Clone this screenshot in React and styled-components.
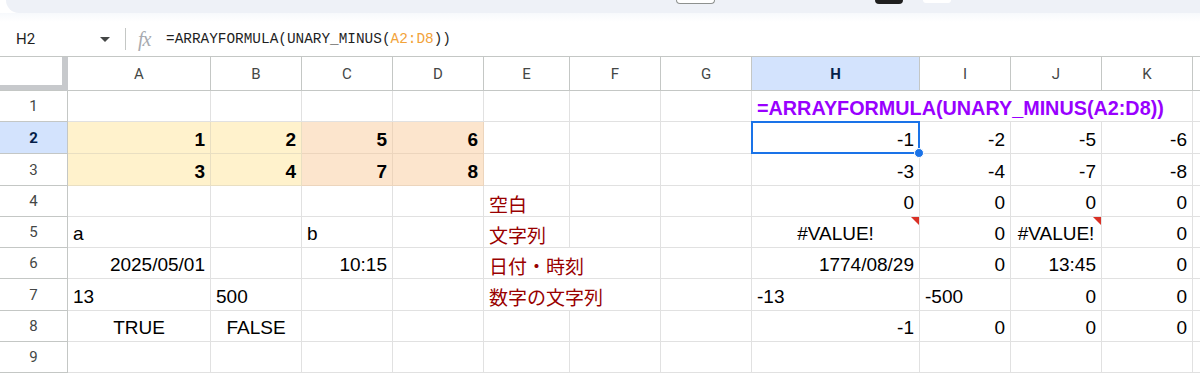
import React from "react";
import styled, { createGlobalStyle } from "styled-components";

const COLS = [68, 143, 91, 91, 91, 86, 91, 91, 168, 91, 91, 91];
const LETTERS = ["A", "B", "C", "D", "E", "F", "G", "H", "I", "J", "K", "L"];
const ROW_H = [31, 32, 32, 31, 31, 31, 32, 31, 31];
const FORMULA = "=ARRAYFORMULA(UNARY_MINUS(A2:D8))";

const Y = "y";
const O = "o";
const label = (v, span) => ({ v, label: true, align: "left", span });
const num = (v) => ({ v: String(v) });

const DATA = [
  { H: { v: FORMULA, bold: true, purple: true, align: "left", span: 4 } },
  {
    A: { v: "1", bold: true, fill: Y }, B: { v: "2", bold: true, fill: Y },
    C: { v: "5", bold: true, fill: O }, D: { v: "6", bold: true, fill: O },
    H: { v: "-1", selected: true }, I: num(-2), J: num(-5), K: num(-6),
  },
  {
    A: { v: "3", bold: true, fill: Y }, B: { v: "4", bold: true, fill: Y },
    C: { v: "7", bold: true, fill: O }, D: { v: "8", bold: true, fill: O },
    H: num(-3), I: num(-4), J: num(-7), K: num(-8),
  },
  { E: label("空白"), H: num(0), I: num(0), J: num(0), K: num(0) },
  {
    A: { v: "a", align: "left" }, C: { v: "b", align: "left" }, E: label("文字列"),
    H: { v: "#VALUE!", align: "center", err: true }, I: num(0),
    J: { v: "#VALUE!", align: "center", err: true }, K: num(0),
  },
  {
    A: { v: "2025/05/01" }, C: { v: "10:15" }, E: label("日付・時刻", 2),
    H: { v: "1774/08/29" }, I: num(0), J: { v: "13:45" }, K: num(0),
  },
  {
    A: { v: "13", align: "left" }, B: { v: "500", align: "left" }, E: label("数字の文字列", 2),
    H: { v: "-13", align: "left" }, I: { v: "-500", align: "left" }, J: num(0), K: num(0),
  },
  {
    A: { v: "TRUE", align: "center" }, B: { v: "FALSE", align: "center" },
    H: num(-1), I: num(0), J: num(0), K: num(0),
  },
  {},
];

const GlobalStyle = createGlobalStyle`
  html, body {
    margin: 0;
    padding: 0;
    background: #ffffff;
    overflow: hidden;
  }
  body {
    font-family: "Liberation Sans", Arial, sans-serif;
  }
`;

const App = () => {
  return (
    <Page>
      <GlobalStyle />
      <Toolbar>
        <ToolStub $w={37} $left={670} $kind="outline" />
        <ToolStub $w={28} $left={160} $kind="dark" />
        <ToolStub $w={28} $left={20} $kind="light" />
      </Toolbar>
      <ToolbarShade />
      <FormulaBar>
        <NameBox>
          <span>H2</span>
          <Caret />
        </NameBox>
        <Divider />
        <Fx>fx</Fx>
        <FormulaText>
          =ARRAYFORMULA(UNARY_MINUS(<RangeRef>A2:D8</RangeRef>))
        </FormulaText>
      </FormulaBar>
      <Sheet>
        <Corner />
        {LETTERS.map((l) => (
          <ColHead key={l} $active={l === "H"}>
            {l === "L" ? "" : l}
          </ColHead>
        ))}
        {DATA.map((row, r) => {
          const cells = [];
          let skip = 0;
          LETTERS.forEach((l) => {
            if (skip > 0) {
              skip -= 1;
              return;
            }
            const c = row[l];
            if (c && c.span) skip = c.span - 1;
            cells.push(
              <Cell
                key={l}
                $h={ROW_H[r]}
                $span={c?.span || 1}
                $align={c?.align || "right"}
                $bold={c?.bold}
                $fill={c?.fill}
                $purple={c?.purple}
                $label={c?.label}
                $selected={c?.selected}
              >
                {c?.v}
                {c?.err && <ErrFlag />}
                {c?.selected && (
                  <Selection>
                    <Handle />
                  </Selection>
                )}
              </Cell>
            );
          });
          return (
            <React.Fragment key={r}>
              <RowHead $h={ROW_H[r]} $active={r === 1}>
                {r + 1}
              </RowHead>
              {cells}
            </React.Fragment>
          );
        })}
      </Sheet>
    </Page>
  );
};

const Page = styled.div`
  width: 1200px;
  height: 376px;
  overflow: hidden;
  background: #ffffff;
`;

const Toolbar = styled.div`
  height: 13px;
  margin-left: 6px;
  background: #eef1f7;
  border-bottom-left-radius: 16px;
  display: flex;
  align-items: flex-start;
`;

const ToolStub = styled.div`
  width: ${({ $w }) => $w}px;
  margin-left: ${({ $left }) => $left}px;
  height: ${({ $kind }) => ($kind === "dark" ? 4 : 3)}px;
  background: ${({ $kind }) => ($kind === "dark" ? "#1f1f1f" : "#ffffff")};
  border: ${({ $kind }) => ($kind === "outline" ? "1px solid #8e918f" : "none")};
  border-top: none;
  border-radius: 0 0 4px 4px;
`;

const ToolbarShade = styled.div`
  height: 9px;
  background: linear-gradient(#f7f9fc, #ffffff);
`;

const FormulaBar = styled.div`
  height: 34px;
  display: flex;
  align-items: center;
  border-bottom: 1px solid #c4c7c5;
  font-family: Roboto, "Liberation Sans", sans-serif;
`;

const NameBox = styled.div`
  width: 115px;
  padding-left: 16px;
  padding-right: 5px;
  box-sizing: border-box;
  display: flex;
  align-items: center;
  justify-content: space-between;
  font-size: 15px;
  color: #1f1f1f;
`;

const Caret = styled.span`
  width: 0;
  height: 0;
  border-left: 5px solid transparent;
  border-right: 5px solid transparent;
  border-top: 5px solid #444746;
`;

const Divider = styled.div`
  width: 1px;
  height: 22px;
  background: #c4c7c5;
  margin-left: 10px;
`;

const Fx = styled.span`
  margin-left: 12px;
  width: 28px;
  font-family: "Liberation Serif", serif;
  font-style: italic;
  font-size: 20px;
  color: #a8abb0;
  letter-spacing: -1px;
`;

const FormulaText = styled.span`
  font-family: "Liberation Mono", "DejaVu Sans Mono", monospace;
  font-size: 14.4px;
  color: #1f1f1f;
`;

const RangeRef = styled.span`
  color: #f2a33a;
`;

const Sheet = styled.div`
  display: grid;
  grid-template-columns: ${COLS.map((c) => c + "px").join(" ")} 1fr;
  grid-auto-rows: auto;
`;

const Corner = styled.div`
  height: 34px;
  box-sizing: border-box;
  border-right: 6px solid #c7c9cc;
  border-bottom: 1px solid #c4c7c5;
  box-shadow: inset 0 -5px 0 #c7c9cc;
`;

const ColHead = styled.div`
  height: 34px;
  box-sizing: border-box;
  border-right: 1px solid #c4c7c5;
  border-bottom: 1px solid #c4c7c5;
  display: flex;
  align-items: center;
  justify-content: center;
  font-family: Roboto, "Liberation Sans", sans-serif;
  font-size: 15px;
  font-weight: ${({ $active }) => ($active ? 700 : 400)};
  color: ${({ $active }) => ($active ? "#041e49" : "#444746")};
  background: ${({ $active }) => ($active ? "#d3e3fd" : "#ffffff")};
`;

const RowHead = styled.div`
  height: ${({ $h }) => $h}px;
  box-sizing: border-box;
  border-right: 1px solid #c4c7c5;
  border-bottom: 1px solid #c4c7c5;
  display: flex;
  align-items: center;
  justify-content: center;
  font-family: Roboto, "Liberation Sans", sans-serif;
  font-size: 15px;
  font-weight: ${({ $active }) => ($active ? 700 : 400)};
  color: ${({ $active }) => ($active ? "#041e49" : "#444746")};
  background: ${({ $active }) => ($active ? "#d3e3fd" : "#ffffff")};
`;

const FILLS = {
  y: { bg: "#fff2cc", line: "#e9dfc2" },
  o: { bg: "#fce5cd", line: "#ecd5bd" },
};

const Cell = styled.div`
  position: relative;
  z-index: ${({ $selected }) => ($selected ? 2 : "auto")};
  grid-column: span ${({ $span }) => $span};
  height: ${({ $h }) => $h}px;
  box-sizing: border-box;
  padding: 4px 5px 0 5px;
  border-right: 1px solid ${({ $fill }) => ($fill ? FILLS[$fill].line : "#e1e1e1")};
  border-bottom: 1px solid ${({ $fill }) => ($fill ? FILLS[$fill].line : "#e1e1e1")};
  background: ${({ $fill }) => ($fill ? FILLS[$fill].bg : "#ffffff")};
  display: flex;
  align-items: center;
  justify-content: ${({ $align }) =>
    $align === "left" ? "flex-start" : $align === "center" ? "center" : "flex-end"};
  white-space: nowrap;
  font-family: ${({ $label }) =>
    $label
      ? '"Noto Sans CJK JP", "Liberation Sans", sans-serif'
      : '"Liberation Sans", Arial, sans-serif'};
  font-size: ${({ $purple }) => ($purple ? "19.8px" : "19px")};
  font-weight: ${({ $bold }) => ($bold ? 700 : 400)};
  color: ${({ $purple, $label }) => ($purple ? "#9900ff" : $label ? "#990000" : "#000000")};
`;

const ErrFlag = styled.span`
  position: absolute;
  top: 0;
  right: 0;
  width: 0;
  height: 0;
  border-top: 8px solid #d93025;
  border-left: 8px solid transparent;
`;

const Selection = styled.span`
  position: absolute;
  top: -1px;
  left: -1px;
  right: -1px;
  bottom: -1px;
  border: 2px solid #1a73e8;
  pointer-events: none;
`;

const Handle = styled.span`
  position: absolute;
  right: -6px;
  bottom: -6px;
  width: 8px;
  height: 8px;
  border-radius: 50%;
  background: #1a73e8;
  border: 1px solid #ffffff;
`;

export default App;
